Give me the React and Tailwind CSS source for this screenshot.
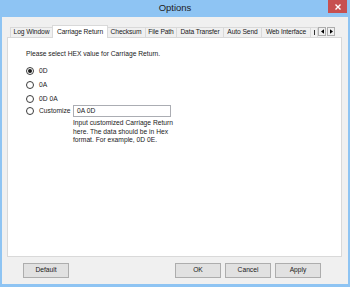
import React from "react";

const FONT = { fontFamily: '"Liberation Sans", Arial, sans-serif' };

const TABS = [
  { label: "Log Window", w: "w-[43px]" },
  { label: "Carriage Return", w: "w-[56px]", active: true },
  { label: "Checksum", w: "w-[40px]" },
  { label: "File Path", w: "w-[32px]" },
  { label: "Data Transfer", w: "w-[48px]" },
  { label: "Auto Send", w: "w-[39px]" },
  { label: "Web Interface", w: "w-[50px]" },
];

function Tab({ label, w, active }) {
  if (active) {
    return (
      <div className={`${w} -mx-[1px] -mb-px h-[13px] bg-white border border-b-0 border-[#d9d9d9] flex items-start justify-center pt-[1px] relative z-20 whitespace-nowrap tracking-[-0.1px]`}>
        {label}
      </div>
    );
  }
  return (
    <div className={`${w} h-[10px] bg-[#f0f0f0] border border-b-0 border-[#d9d9d9] -ml-px first:ml-0 flex items-center justify-center whitespace-nowrap leading-none tracking-[-0.1px]`}>
      {label}
    </div>
  );
}

function Arrow({ dir }) {
  return (
    <div className="w-[8px] h-[9px] bg-[#f0f0f0] border border-[#adadad] flex items-center justify-center">
      <svg viewBox="0 0 4 6" className="w-[3px] h-[5px]">
        {dir === "left" ? <path d="M4 0v6L0 3z" fill="#000" /> : <path d="M0 0v6l4-3z" fill="#000" />}
      </svg>
    </div>
  );
}

function Radio({ checked, label }) {
  return (
    <div className="flex items-center gap-[5px]">
      <div className="w-[8px] h-[8px] rounded-full border border-[#3c3c3c] bg-white flex items-center justify-center">
        {checked && <div className="w-[4px] h-[4px] rounded-full bg-[#1a1a1a]" />}
      </div>
      <span>{label}</span>
    </div>
  );
}

function Button({ children }) {
  return (
    <div className="w-[46px] h-[15px] bg-[#e1e1e1] border border-[#adadad] flex items-center justify-center">
      {children}
    </div>
  );
}

export default function App() {
  return (
    <div className="w-[350px] h-[287px] bg-[#8ec4f3] flex flex-col text-[6.7px] text-[#1a1a1a]" style={FONT}>
      <div className="h-[17px] relative flex items-center justify-center">
        <span className="text-[9.5px] text-[#222] -mt-px">Options</span>
        <div className="absolute right-[3px] top-0 w-[19px] h-[13px] bg-[#c75050] flex items-center justify-center">
          <svg viewBox="0 0 6 6" className="w-[6px] h-[6px]">
            <path d="M0.5 0.5l5 5M5.5 0.5l-5 5" stroke="#fff" strokeWidth="1.4" />
          </svg>
        </div>
      </div>
      <div className="flex-1 mx-[2px] mb-[3px] bg-[#f0f0f0] flex flex-col">
        <div className="h-[12px] mt-[8px] pl-[8px] flex items-end relative z-10">
          {TABS.map((t) => (
            <Tab key={t.label} {...t} />
          ))}
          <div className="w-[8px] h-[10px] bg-[#f0f0f0] border border-b-0 border-[#d9d9d9] -ml-px pl-[3px] pt-[2px]">
            <div className="w-px h-[5px] bg-[#333]" />
          </div>
          <div className="flex gap-[1px] self-start mt-[2px]">
            <Arrow dir="left" />
            <Arrow dir="right" />
          </div>
        </div>
        <div className="ml-[5px] mr-[6px] h-[220px] bg-white border border-[#d9d9d9] pl-[18px] pt-[12px]">
          <div className="leading-[8px]">Please select HEX value for Carriage Return.</div>
          <div className="mt-[9px] flex flex-col gap-[6px] leading-[8px]">
            <Radio checked label="0D" />
            <Radio label="0A" />
            <Radio label="0D 0A" />
          </div>
          <div className="mt-[2px] flex items-center">
            <div className="w-[47px]">
              <Radio label="Customize" />
            </div>
            <div className="w-[98px] h-[12px] border border-[#abadb3] bg-white pl-[3px] flex items-center">0A 0D</div>
          </div>
          <div className="ml-[47px] mt-[2px] w-[108px] leading-[8.5px]">
            Input customized Carriage Return here. The data should be in Hex format. For example, 0D 0E.
          </div>
        </div>
        <div className="mt-[6px] flex pl-[21px]">
          <Button>Default</Button>
          <div className="ml-auto mr-[27px] flex gap-[4px]">
            <Button>OK</Button>
            <Button>Cancel</Button>
            <Button>Apply</Button>
          </div>
        </div>
      </div>
    </div>
  );
}
